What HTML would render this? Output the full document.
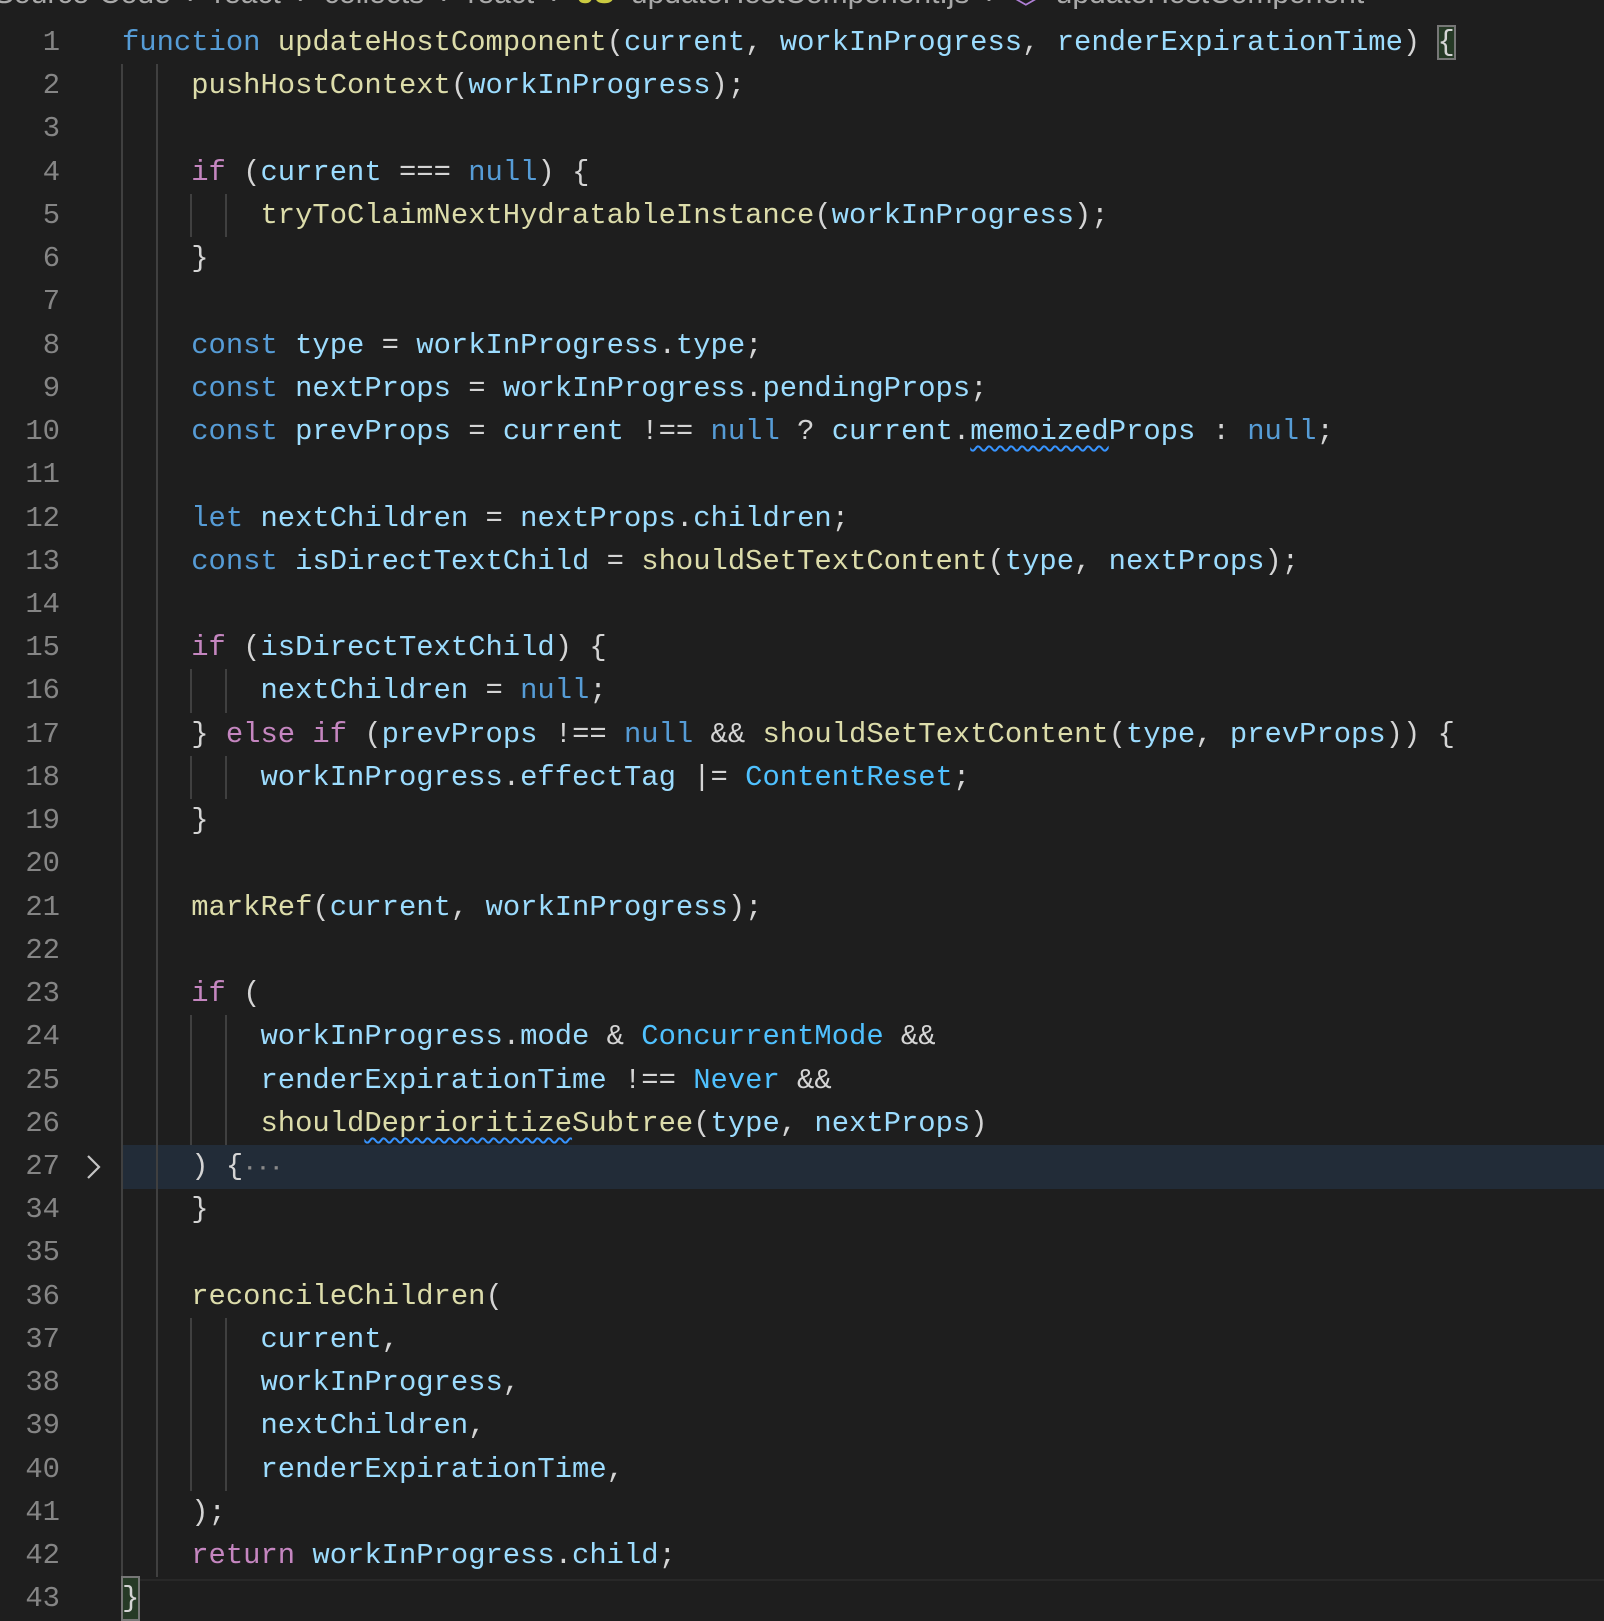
<!DOCTYPE html>
<html><head><meta charset="utf-8"><style>
html,body{margin:0;padding:0;background:#1e1e1e;width:1604px;height:1618px;overflow:hidden}
.ln{position:absolute;left:0;width:60px;text-align:right;color:#858585;font:28.85px "Liberation Mono",monospace;height:43.23px;line-height:43.23px}
.t{position:absolute;left:122px;white-space:pre;color:#d4d4d4;font:28.85px "Liberation Mono",monospace;height:43.23px;line-height:43.23px}
.g{position:absolute;width:2px;background:#404040;height:43.3px}
.k{color:#569cd6}.f{color:#dcdcaa}.v{color:#9cdcfe}.c{color:#c586c0}.e{color:#4fc1ff}
.w{text-decoration:underline wavy #3794ff;text-underline-offset:6px;text-decoration-thickness:1.5px}
.bc{position:absolute;top:-24px;left:-6px;white-space:pre;font:30px "Liberation Sans",sans-serif;color:#a9a9a9}
</style></head><body>
<div class="bc">Source-Code  ›  react  ›  collects  ›  react  ›  <span style="color:#cbcb41;font-weight:bold">JS</span>  updateHostComponent.js  ›  <span style="color:#b180d7">⬡</span>  updateHostComponent</div>
<div style="position:absolute;left:122px;top:1145px;width:1482px;height:43.5px;background:#222c38"></div>
<div style="position:absolute;left:122px;top:1579px;width:1482px;height:2px;background:#282828"></div>
<div id="c"></div>
<svg style="position:absolute;left:84px;top:1153px" width="20" height="28"><path d="M4 3 L15 14 L4 25" stroke="#c5c5c5" stroke-width="2.2" fill="none"/></svg>
<script>
const L=[
[1,0,'<span class="k">function</span> <span class="f">updateHostComponent</span>(<span class="v">current</span>, <span class="v">workInProgress</span>, <span class="v">renderExpirationTime</span>) <span style="outline:2px solid #777;outline-offset:-1px;background:#263a26">{</span>'],
[2,4,'<span class="f">pushHostContext</span>(<span class="v">workInProgress</span>);'],
[3,4,''],
[4,4,'<span class="c">if</span> (<span class="v">current</span> === <span class="k">null</span>) {'],
[5,8,'<span class="f">tryToClaimNextHydratableInstance</span>(<span class="v">workInProgress</span>);'],
[6,4,'}'],
[7,4,''],
[8,4,'<span class="k">const</span> <span class="v">type</span> = <span class="v">workInProgress</span>.<span class="v">type</span>;'],
[9,4,'<span class="k">const</span> <span class="v">nextProps</span> = <span class="v">workInProgress</span>.<span class="v">pendingProps</span>;'],
[10,4,'<span class="k">const</span> <span class="v">prevProps</span> = <span class="v">current</span> !== <span class="k">null</span> ? <span class="v">current</span>.<span class="v"><span class="w">memoized</span>Props</span> : <span class="k">null</span>;'],
[11,4,''],
[12,4,'<span class="k">let</span> <span class="v">nextChildren</span> = <span class="v">nextProps</span>.<span class="v">children</span>;'],
[13,4,'<span class="k">const</span> <span class="v">isDirectTextChild</span> = <span class="f">shouldSetTextContent</span>(<span class="v">type</span>, <span class="v">nextProps</span>);'],
[14,4,''],
[15,4,'<span class="c">if</span> (<span class="v">isDirectTextChild</span>) {'],
[16,8,'<span class="v">nextChildren</span> = <span class="k">null</span>;'],
[17,4,'} <span class="c">else if</span> (<span class="v">prevProps</span> !== <span class="k">null</span> &amp;&amp; <span class="f">shouldSetTextContent</span>(<span class="v">type</span>, <span class="v">prevProps</span>)) {'],
[18,8,'<span class="v">workInProgress</span>.<span class="v">effectTag</span> |= <span class="e">ContentReset</span>;'],
[19,4,'}'],
[20,4,''],
[21,4,'<span class="f">markRef</span>(<span class="v">current</span>, <span class="v">workInProgress</span>);'],
[22,4,''],
[23,4,'<span class="c">if</span> ('],
[24,8,'<span class="v">workInProgress</span>.<span class="v">mode</span> &amp; <span class="e">ConcurrentMode</span> &amp;&amp;'],
[25,8,'<span class="v">renderExpirationTime</span> !== <span class="e">Never</span> &amp;&amp;'],
[26,8,'<span class="f">should<span class="w">Deprioritize</span>Subtree</span>(<span class="v">type</span>, <span class="v">nextProps</span>)'],
[27,4,') {<span style="color:#8a8a8a;font-size:22px;font-weight:bold">···</span>'],
[34,4,'}'],
[35,4,''],
[36,4,'<span class="f">reconcileChildren</span>('],
[37,8,'<span class="v">current</span>,'],
[38,8,'<span class="v">workInProgress</span>,'],
[39,8,'<span class="v">nextChildren</span>,'],
[40,8,'<span class="v">renderExpirationTime</span>,'],
[41,4,');'],
[42,4,'<span class="c">return</span> <span class="v">workInProgress</span>.<span class="v">child</span>;'],
[43,0,'<span style="outline:2px solid #777;outline-offset:-1px;background:#263a26;display:inline-block;height:43px">}</span>']
];
let h='';const cw=17.31,lh=43.23;
L.forEach((l,i)=>{const top=21+i*lh;
h+=`<div class="ln" style="top:${top}px">${l[0]}</div>`;
for(let c=0;c<l[1];c+=2)h+=`<div class="g" style="left:${121+c*cw}px;top:${top}px"></div>`;
h+=`<div class="t" style="top:${top}px;left:${122+l[1]*cw}px">${l[2]}</div>`;});
document.getElementById('c').innerHTML=h;
</script>
</body></html>
